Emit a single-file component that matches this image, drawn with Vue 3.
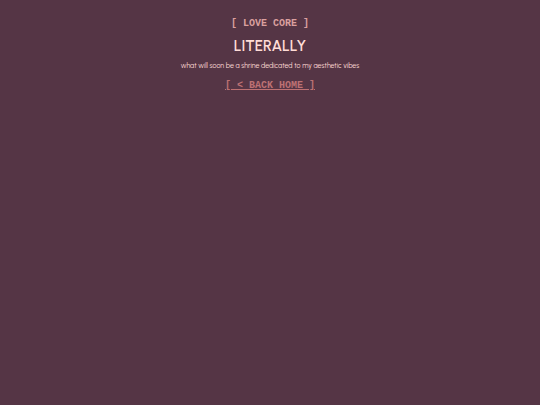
<template>
  <main class="shrine">
    <h2 class="tag">[ LOVE CORE ]</h2>
    <h1 class="title">LITERALLY</h1>
    <p class="intro">what will soon be a shrine dedicated to my aesthetic vibes</p>
    <a class="back" href="#home">[ &lt; BACK HOME ]</a>
  </main>
</template>

<script setup>
</script>

<style>
body {
  background-color: #553545;
}
</style>

<style scoped>
.shrine {
  display: flex;
  flex-direction: column;
  align-items: center;
  padding: 16px 8px;
  text-align: center;
}

.tag,
.back {
  font-family: 'Liberation Mono', 'Courier New', monospace;
  font-size: 10px;
  font-weight: bold;
  line-height: 16px;
}

.tag {
  margin: 0;
  color: #dba09f;
}

.title {
  margin: 4px 0;
  color: #ffdcd6;
  font-family: Urbanist, Quicksand, 'Open Sans', sans-serif;
  font-size: 15px;
  font-weight: 600;
  line-height: 20px;
}

.intro {
  margin: 0 0 6px;
  color: #ffdcd6;
  font-family: Urbanist, Quicksand, 'Open Sans', sans-serif;
  font-size: 7px;
  font-weight: 400;
  line-height: 12px;
}

.back {
  color: #bd7173;
}
</style>
